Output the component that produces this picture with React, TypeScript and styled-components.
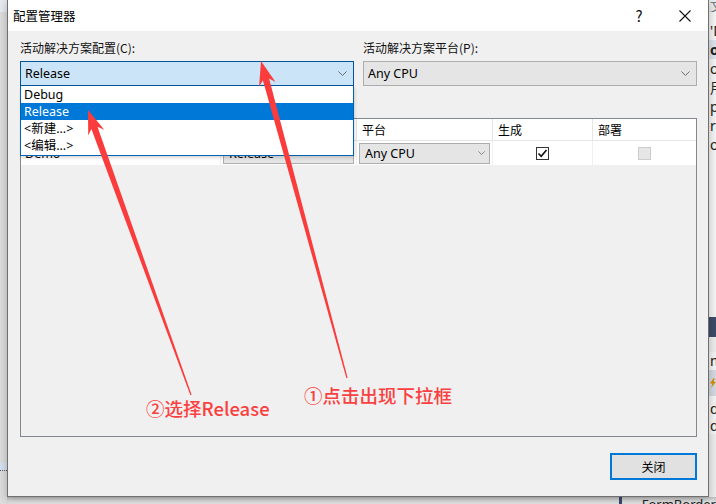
import React from "react";
import styled, { createGlobalStyle } from "styled-components";

const Global = createGlobalStyle`
  html, body { margin: 0; padding: 0; }
  body { width: 716px; height: 504px; overflow: hidden; background: #e4e4e4; }
  * { box-sizing: border-box; }
`;

const UI_FONT = `"Noto Sans", "Noto Sans CJK SC", sans-serif`;

const Desktop = styled.div`
  position: relative;
  width: 716px;
  height: 504px;
  display: grid;
  grid-template-columns: 7px 702px 7px;
  grid-template-rows: 497px 7px;
  font-family: ${UI_FONT};
  font-size: 12px;
  color: #000;
  overflow: hidden;
`;

const LeftStrip = styled.div`
  grid-row: 1 / 3;
  background: linear-gradient(#e6e9ee 0 12px, #dcdcdc 12px);
  display: flex;
  flex-direction: column;
  justify-content: flex-end;
  padding-bottom: 33px;
`;

const LeftBand = styled.div`
  height: 8px;
  background: #d5e1ef;
  border-bottom: 1px dotted #555;
`;

const RightStrip = styled.div`
  grid-row: 1 / 2;
  grid-column: 3;
  background: #f4f4f4;
  display: flex;
  flex-direction: column;
  font-size: 14px;
  line-height: 16px;
  overflow: hidden;
  white-space: nowrap;
`;

const StripText = styled.div<{ $bg?: string; $h?: number; $color?: string; $bold?: boolean }>`
  height: ${(p) => p.$h ?? 19}px;
  flex: none;
  overflow: hidden;
  background: ${(p) => p.$bg ?? "transparent"};
  color: ${(p) => p.$color ?? "#222"};
  font-weight: ${(p) => (p.$bold ? 700 : 400)};
  padding-left: 1px;
  display: flex;
  align-items: center;
`;

const BottomStrip = styled.div`
  grid-row: 2;
  grid-column: 2 / 4;
  background: #e2e2e2;
  display: flex;
  align-items: flex-start;
  padding-left: 612px;
  overflow: hidden;
  box-shadow: inset 0 3px 4px -2px rgba(0,0,0,0.25);
`;

const NavyBar = styled.div`
  width: 6px;
  height: 7px;
  background: #3a4a6a;
`;

const BottomText = styled.div`
  margin-left: 20px;
  margin-top: -2px;
  font-size: 13px;
  color: #222;
  white-space: nowrap;
`;

const Dialog = styled.div`
  grid-row: 1;
  grid-column: 2;
  display: flex;
  flex-direction: column;
  border: 1px solid #6f6f6f;
  border-top: none;
  background: #f0f0f0;
  box-shadow: 0 2px 8px rgba(0,0,0,0.25);
  position: relative;
`;

const TitleBar = styled.div`
  height: 31px;
  background: #fff;
  display: flex;
  align-items: center;
  padding-left: 5px;
  font-family: "Noto Sans CJK SC", sans-serif;
  font-size: 12.5px;
`;

const Title = styled.div`
  flex: 1;
`;

const TitleButton = styled.div<{ $w: number }>`
  width: ${(p) => p.$w}px;
  height: 31px;
  display: flex;
  align-items: center;
  justify-content: center;
  font-size: 15px;
  color: #111;
`;

const Body = styled.div`
  flex: 1;
  display: flex;
  flex-direction: column;
  padding: 9px 11px 15px 12px;
  position: relative;
`;

const TopRow = styled.div`
  display: grid;
  grid-template-columns: 334px 1fr;
  column-gap: 9px;
`;

const Field = styled.div`
  display: flex;
  flex-direction: column;
  gap: 5px;
  position: relative;
`;

const Label = styled.div`
  height: 16px;
  line-height: 16px;
  font-family: "Noto Sans CJK SC", sans-serif;
  font-size: 12px;
  color: #111;
`;

const Combo = styled.div<{ $active?: boolean; $h?: number }>`
  height: ${(p) => p.$h ?? 25}px;
  display: flex;
  align-items: center;
  justify-content: space-between;
  padding: 0 6px 0 4px;
  background: ${(p) => (p.$active ? "#cce4f7" : "#e5e5e5")};
  border: 1px solid ${(p) => (p.$active ? "#005499" : "#adadad")};
  font-size: 12.5px;
  color: #000;
`;

const Chevron = ({ size = 9 }: { size?: number }) => (
  <svg width={size} height={size * 0.6} viewBox="0 0 10 6">
    <path d="M0.5 0.5 L5 5 L9.5 0.5" fill="none" stroke="#606060" strokeWidth="1" />
  </svg>
);

const DropList = styled.div`
  position: absolute;
  top: 46px;
  left: 0;
  width: 334px;
  background: #fff;
  border: 1px solid #0063b1;
  border-top: none;
  padding-bottom: 1px;
  z-index: 3;
  box-shadow: 1px 2px 3px rgba(0,0,0,0.15);
`;

const DropItem = styled.div<{ $selected?: boolean }>`
  height: 17px;
  line-height: 17px;
  padding-left: 3px;
  font-size: 12.5px;
  background: ${(p) => (p.$selected ? "#0078d7" : "#fff")};
  color: ${(p) => (p.$selected ? "#fff" : "#000")};
`;

const GridPanel = styled.div`
  margin-top: 32px;
  height: 319px;
  border: 1px solid #828790;
  background: #f0f0f0;
  display: flex;
  flex-direction: column;
`;

const GridRow = styled.div<{ $h: number }>`
  height: ${(p) => p.$h}px;
  display: grid;
  grid-template-columns: 200px 136px 136px 100px 1fr;
  background: #fff;
`;

const HeadCell = styled.div`
  display: flex;
  align-items: center;
  padding-left: 5px;
  border-right: 1px solid #e5e5e5;
  border-bottom: 1px solid #e5e5e5;
  font-family: "Noto Sans CJK SC", sans-serif;
  font-size: 12px;
  &:last-child { border-right: none; }
`;

const Cell = styled.div<{ $center?: boolean }>`
  display: flex;
  align-items: center;
  justify-content: ${(p) => (p.$center ? "center" : "flex-start")};
  padding: 0 2px;
  border-right: 1px solid #f0f0f0;
  font-size: 12.5px;
  &:last-child { border-right: none; }
`;

const CellText = styled.div`
  padding-left: 2px;
`;

const CellCombo = styled(Combo)`
  width: 131px;
  height: 21px;
  padding: 0 4px 0 5px;
`;

const Check = styled.div<{ $disabled?: boolean }>`
  width: 13px;
  height: 13px;
  border: 1px solid ${(p) => (p.$disabled ? "#cccccc" : "#333")};
  background: ${(p) => (p.$disabled ? "#e6e6e6" : "#fff")};
  display: flex;
  align-items: center;
  justify-content: center;
`;

const Footer = styled.div`
  margin-top: 16px;
  display: flex;
  justify-content: flex-end;
`;

const Button = styled.div`
  width: 87px;
  height: 27px;
  border: 2px solid #0078d7;
  background: #e1e1e1;
  display: flex;
  align-items: center;
  justify-content: center;
  font-family: "Noto Sans CJK SC", sans-serif;
  font-size: 12px;
`;

const Overlay = styled.svg`
  position: absolute;
  left: 0;
  top: 0;
  width: 716px;
  height: 504px;
  pointer-events: none;
  z-index: 10;
`;

const Note = styled.div<{ $x: number; $y: number }>`
  position: absolute;
  left: ${(p) => p.$x}px;
  top: ${(p) => p.$y}px;
  font-family: "Noto Sans CJK SC", sans-serif;
  font-size: 18.5px;
  font-weight: 500;
  color: #fa4040;
  white-space: nowrap;
  z-index: 11;
  line-height: 24px;
`;

function arrowPoints(tx: number, ty: number, px: number, py: number) {
  const dx = px - tx;
  const dy = py - ty;
  const len = Math.hypot(dx, dy);
  const ux = dx / len;
  const uy = dy / len;
  const nx = -uy;
  const ny = ux;
  const headLen = 24;
  const joinLen = 19;
  const headHalf = 8.5;
  const shaftHalf = 3.2;
  const tailHalf = 0.6;
  const bx = px - ux * headLen;
  const by = py - uy * headLen;
  const jx = px - ux * joinLen;
  const jy = py - uy * joinLen;
  const pts = [
    [tx + nx * tailHalf, ty + ny * tailHalf],
    [jx + nx * shaftHalf, jy + ny * shaftHalf],
    [bx + nx * headHalf, by + ny * headHalf],
    [px, py],
    [bx - nx * headHalf, by - ny * headHalf],
    [jx - nx * shaftHalf, jy - ny * shaftHalf],
    [tx - nx * tailHalf, ty - ny * tailHalf],
  ];
  return pts.map((p) => `${p[0].toFixed(1)},${p[1].toFixed(1)}`).join(" ");
}

export default function App() {
  return (
    <Desktop>
      <Global />
      <LeftStrip>
        <LeftBand />
      </LeftStrip>
      <Dialog>
        <TitleBar>
          <Title>配置管理器</Title>
          <TitleButton $w={46}>?</TitleButton>
          <TitleButton $w={46}>
            <svg width="12" height="12" viewBox="0 0 12 12">
              <path d="M0.5 0.5 L11.5 11.5 M11.5 0.5 L0.5 11.5" stroke="#111" strokeWidth="1.1" />
            </svg>
          </TitleButton>
        </TitleBar>
        <Body>
          <TopRow>
            <Field>
              <Label>活动解决方案配置(C):</Label>
              <Combo $active>
                <span>Release</span>
                <Chevron />
              </Combo>
              <DropList>
                <DropItem>Debug</DropItem>
                <DropItem $selected>Release</DropItem>
                <DropItem>&lt;新建...&gt;</DropItem>
                <DropItem>&lt;编辑...&gt;</DropItem>
              </DropList>
            </Field>
            <Field>
              <Label>活动解决方案平台(P):</Label>
              <Combo>
                <span>Any CPU</span>
                <Chevron />
              </Combo>
            </Field>
          </TopRow>
          <GridPanel>
            <GridRow $h={22}>
              <HeadCell>项目</HeadCell>
              <HeadCell>配置</HeadCell>
              <HeadCell>平台</HeadCell>
              <HeadCell>生成</HeadCell>
              <HeadCell>部署</HeadCell>
            </GridRow>
            <GridRow $h={24}>
              <Cell><CellText>Demo</CellText></Cell>
              <Cell>
                <CellCombo><span>Release</span><Chevron size={7} /></CellCombo>
              </Cell>
              <Cell>
                <CellCombo><span>Any CPU</span><Chevron size={7} /></CellCombo>
              </Cell>
              <Cell $center>
                <Check>
                  <svg width="11" height="11" viewBox="0 0 11 11">
                    <path d="M1.5 5.5 L4.2 8.3 L9.5 2" fill="none" stroke="#111" strokeWidth="1.6" />
                  </svg>
                </Check>
              </Cell>
              <Cell $center>
                <Check $disabled />
              </Cell>
            </GridRow>
          </GridPanel>
          <Footer>
            <Button>关闭</Button>
          </Footer>
        </Body>
      </Dialog>
      <RightStrip>
        <StripText $h={12} $bg="#e8ebf0" $color="#777">文</StripText>
        <StripText $h={9} />
        <StripText>'D</StripText>
        <StripText $bg="#dde3ec" $bold>o</StripText>
        <StripText>o</StripText>
        <StripText>用</StripText>
        <StripText>p</StripText>
        <StripText>r</StripText>
        <StripText>o</StripText>
        <StripText $h={163} />
        <StripText $h={20} $bg="#3d4b68" />
        <StripText $h={15} $bg="#ececec" />
        <StripText $h={18}>m</StripText>
        <StripText $h={26} $bg="#d4d8e0">
          <svg width="10" height="16" viewBox="0 0 10 16">
            <path d="M6 0 L0 9 L4 9 L2 16 L10 6 L6 6 L8 0 Z" fill="#d08f00" />
          </svg>
        </StripText>
        <StripText $h={4} />
        <StripText $h={17}>d</StripText>
        <StripText $h={17}>d</StripText>
        <StripText $h={64} $bg="#ececec" />
      </RightStrip>
      <BottomStrip>
        <NavyBar />
        <BottomText>FormBorder</BottomText>
      </BottomStrip>
      <Overlay viewBox="0 0 716 504">
        <polygon points={arrowPoints(347, 378, 261, 61)} fill="#fa3c3c" />
        <polygon points={arrowPoints(191, 395, 88, 110)} fill="#fa3c3c" />
      </Overlay>
      <Note $x={304} $y={383}>①点击出现下拉框</Note>
      <Note $x={146} $y={396}>②选择Release</Note>
    </Desktop>
  );
}
